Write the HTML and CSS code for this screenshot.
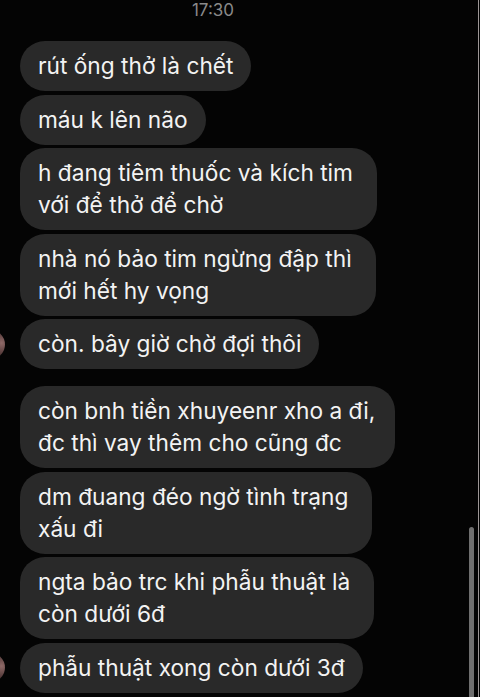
FILE: index.html
```html
<!DOCTYPE html>
<html lang="vi">
<head>
<meta charset="utf-8">
<link rel="stylesheet" href="styles.css">
</head>
<body>
<div class="screen">
  <div class="time">17:30</div>
  <div class="thread">
    <div class="row"><span class="av-slot"></span><div class="bubble">rút ống thở là chết</div></div>
    <div class="row"><span class="av-slot"></span><div class="bubble">máu k lên não</div></div>
    <div class="row"><span class="av-slot"></span><div class="bubble multi">h đang tiêm thuốc và kích tim<br>với để thở để chờ</div></div>
    <div class="row"><span class="av-slot"></span><div class="bubble multi">nhà nó bảo tim ngừng đập thì<br>mới hết hy vọng</div></div>
    <div class="row"><span class="av-slot avatar"></span><div class="bubble">còn. bây giờ chờ đợi thôi</div></div>
  </div>
  <div class="thread second">
    <div class="row"><span class="av-slot"></span><div class="bubble multi wide">còn bnh tiền xhuyeenr xho a đi,<br>đc thì vay thêm cho cũng đc</div></div>
    <div class="row"><span class="av-slot"></span><div class="bubble multi">dm đuang đéo ngờ tình trạng<br>xấu đi</div></div>
    <div class="row"><span class="av-slot"></span><div class="bubble multi">ngta bảo trc khi phẫu thuật là<br>còn dưới 6đ</div></div>
    <div class="row"><span class="av-slot avatar"></span><div class="bubble">phẫu thuật xong còn dưới 3đ</div></div>
  </div>
  <div class="scrollbar"></div>
</div>
</body>
</html>
```
FILE: styles.css
```css
html, body {
  margin: 0;
  padding: 0;
  background: #040404;
}
body {
  width: 480px;
  height: 697px;
  overflow: hidden;
}
.screen {
  position: relative;
  width: 478px;
  height: 697px;
  border-right: 1px solid #9c9696;
  background: #040404;
  font-family: Inter, "Noto Sans", sans-serif;
  color: #f3f3f3;
  overflow: hidden;
}
.time {
  text-align: center;
  font-size: 17px;
  line-height: 20px;
  color: #8a8a8a;
  height: 20px;
  margin-left: -52px;
}
.thread {
  margin-top: 21px;
  margin-left: -24px;
  display: flex;
  flex-direction: column;
  gap: 3.5px;
}
.thread.second {
  margin-top: 17px;
}
.row {
  display: flex;
  align-items: center;
  gap: 15px;
}
.av-slot {
  flex: 0 0 29px;
  height: 29px;
  border-radius: 50%;
}
.avatar {
  background: radial-gradient(circle at 88% 45%, #8f6a68 0%, #5e4241 30%, #2a1c1b 70%, #120d0d 100%);
}
.bubble {
  background: #292929;
  border-radius: 25px;
  padding: 9px 18px;
  font-size: 22.7px;
  line-height: 32px;
  white-space: nowrap;
}
.bubble.multi {
  padding-right: 24px;
}
.bubble.multi.wide {
  padding-right: 20px;
}
.scrollbar {
  position: absolute;
  left: 469px;
  top: 527px;
  width: 5px;
  height: 180px;
  border-radius: 3px;
  background: #6f6f6f;
}
```
